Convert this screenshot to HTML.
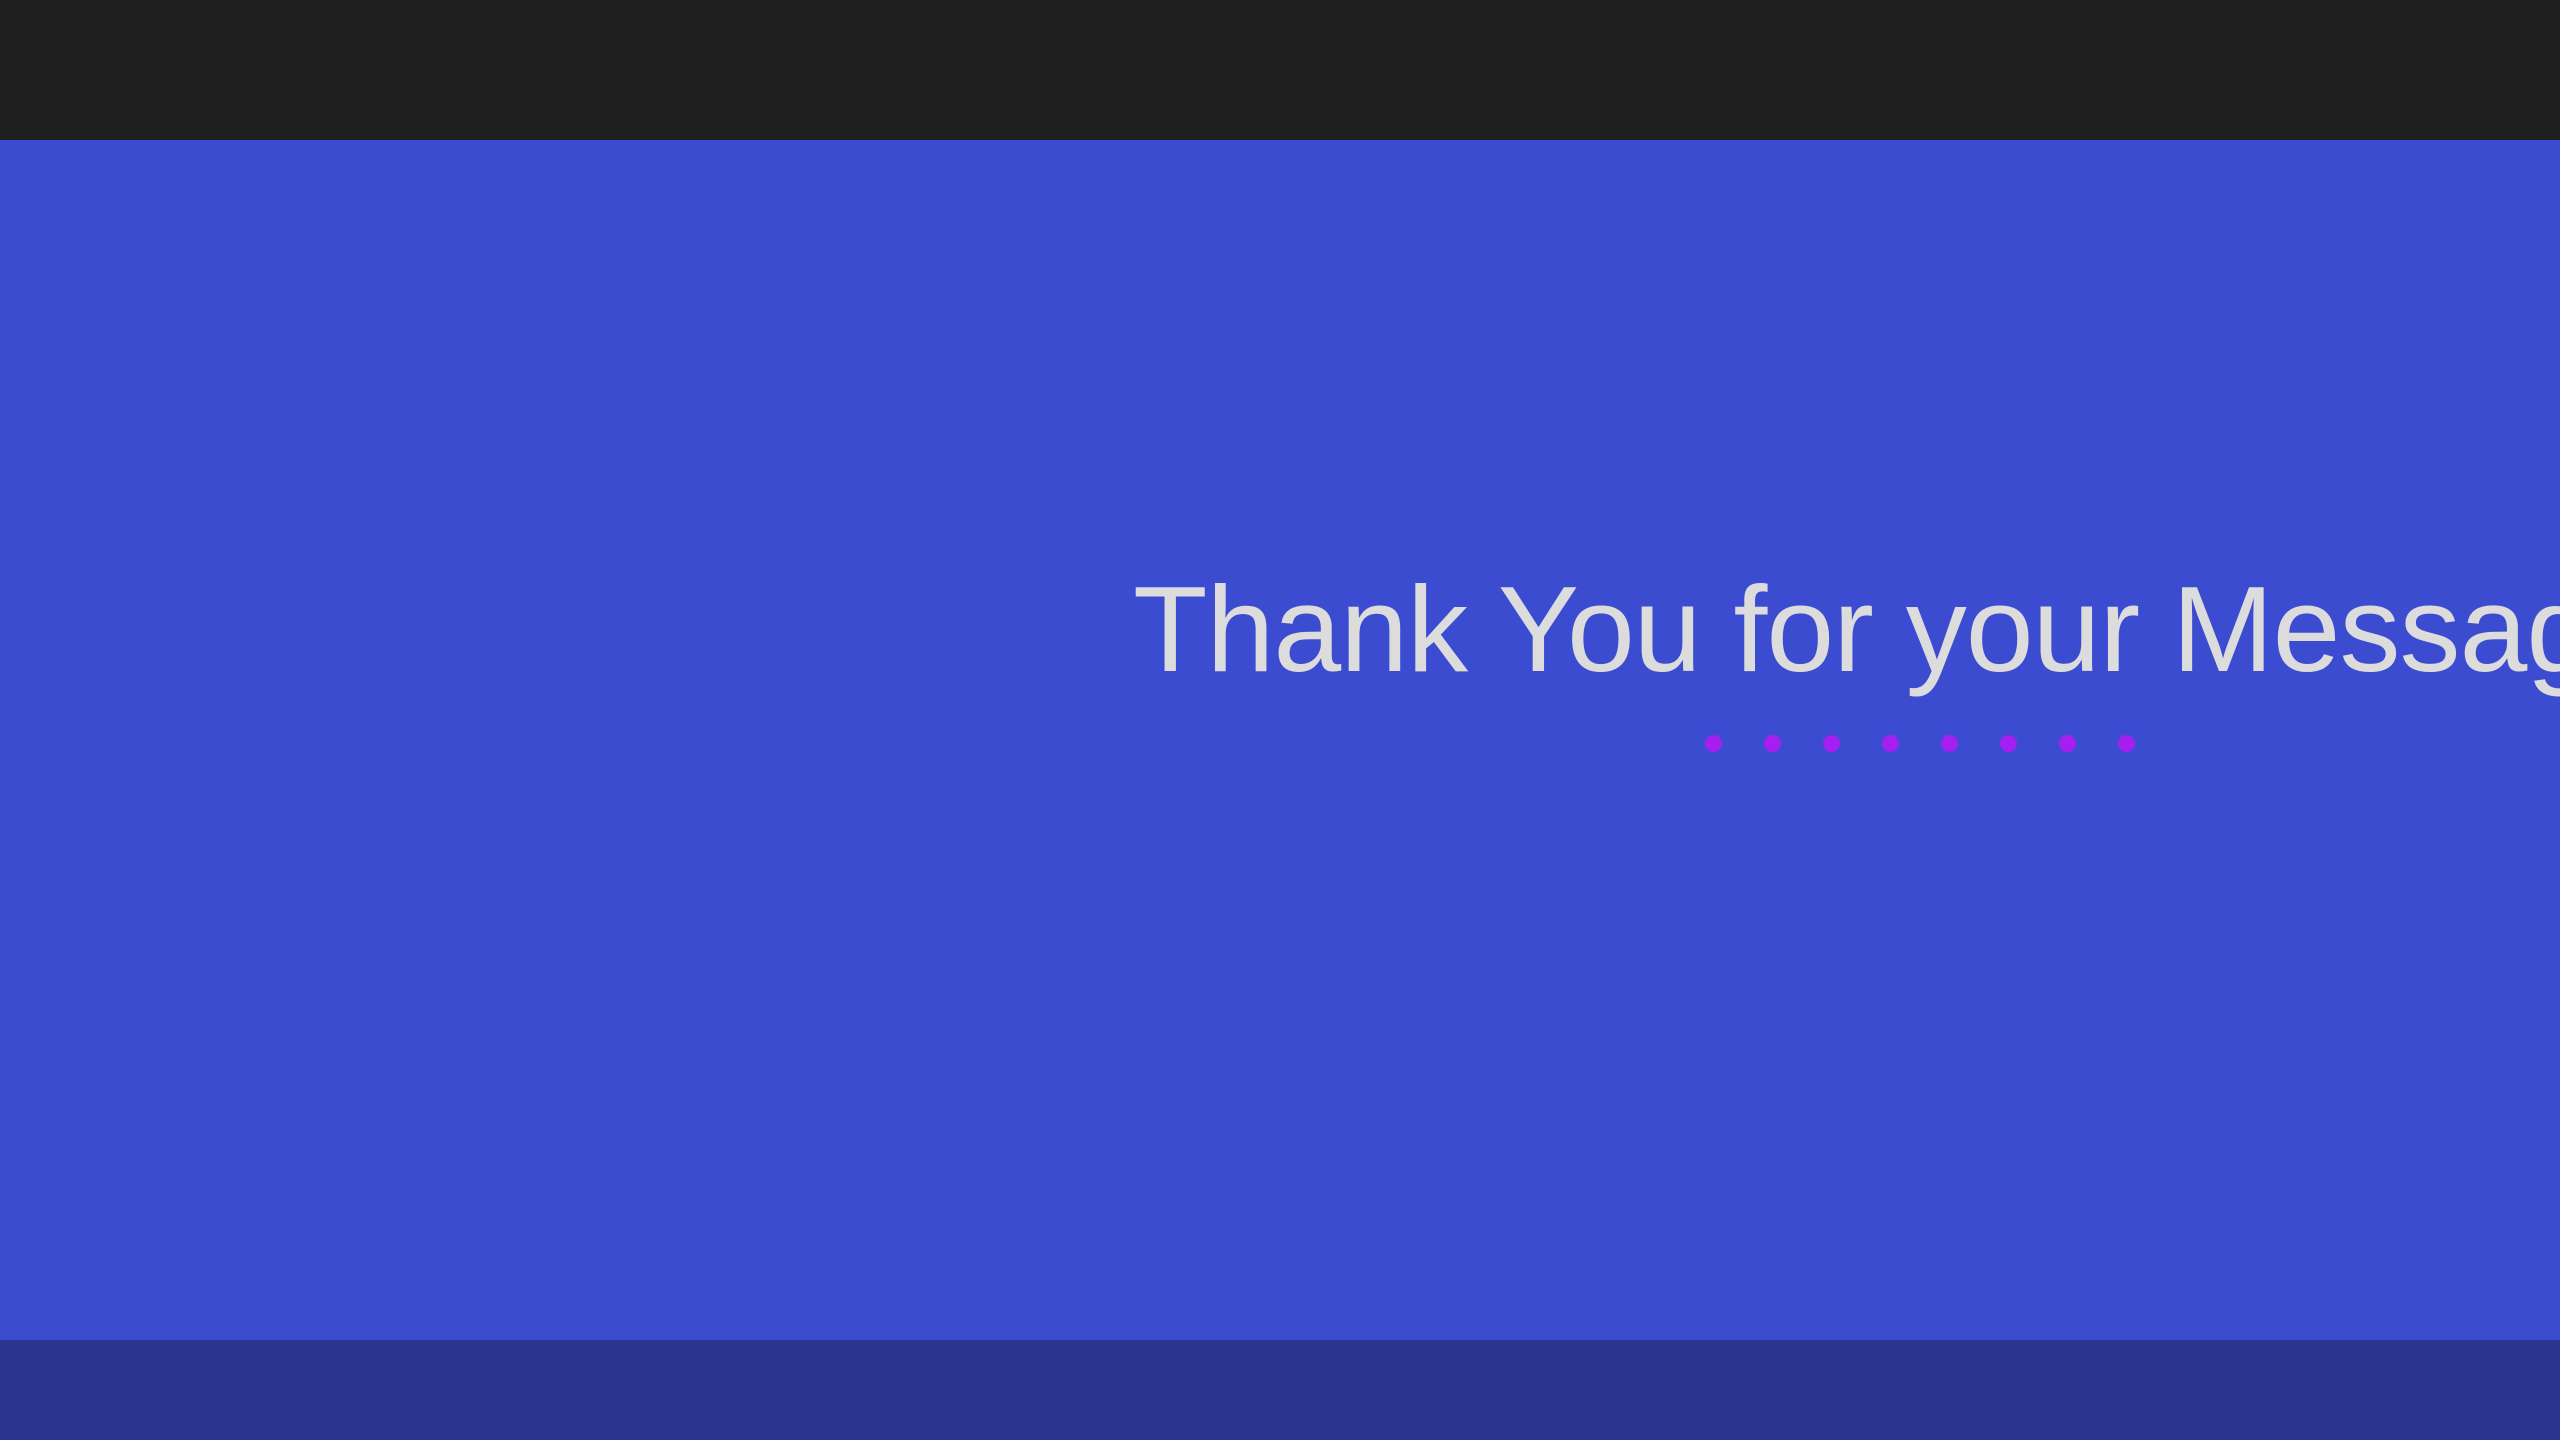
<!DOCTYPE html>
<html><head><meta charset="utf-8"><style>
html,body{margin:0;padding:0;width:2560px;height:1440px;overflow:hidden;background:#3c4cd1;}
.top{position:absolute;left:0;top:0;width:2560px;height:140px;background:#1e1e1e;}
.bot{position:absolute;left:0;top:1340px;width:2560px;height:100px;background:#2a358f;}
.t{position:absolute;left:1133px;top:554px;font-family:"Liberation Sans",sans-serif;font-size:122px;line-height:150px;color:#dcdcdc;white-space:nowrap;letter-spacing:-1px;}
.d{position:absolute;top:735px;width:17px;height:17px;border-radius:50%;background:#a51ff0;}
</style></head><body>
<div class="top"></div>
<div class="t">Thank You for your Message</div>
<div class="d" style="left:1705px"></div>
<div class="d" style="left:1764px"></div>
<div class="d" style="left:1823px"></div>
<div class="d" style="left:1882px"></div>
<div class="d" style="left:1941px"></div>
<div class="d" style="left:2000px"></div>
<div class="d" style="left:2059px"></div>
<div class="d" style="left:2118px"></div>
<div class="bot"></div>
</body></html>
